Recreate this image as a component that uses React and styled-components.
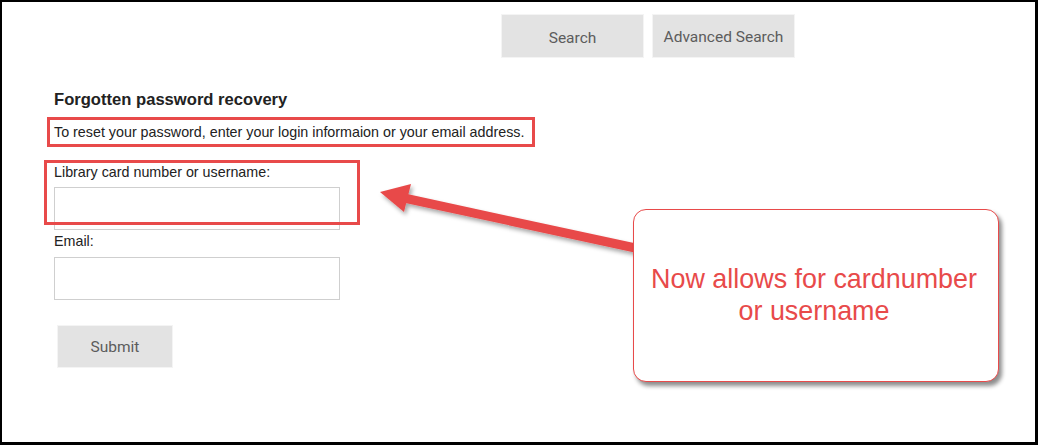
import React from "react";
import styled, { createGlobalStyle } from "styled-components";

const GlobalStyle = createGlobalStyle`
  html, body {
    margin: 0;
    padding: 0;
    background: #fff;
  }
  body {
    font-family: "Liberation Sans", Arial, sans-serif;
  }
`;

const ANNOTATION_RED = "#e84a4a";

const Frame = styled.div`
  position: relative;
  box-sizing: border-box;
  width: 1038px;
  height: 445px;
  border-style: solid;
  border-color: #000;
  border-width: 2px 3px 3px 2px;
  background: #fff;
  overflow: hidden;
`;

const TopBar = styled.div`
  display: flex;
  align-items: flex-start;
  gap: 10px;
  padding: 13px 0 0 500px;
`;

const GreyButton = styled.button`
  box-sizing: border-box;
  width: ${(p) => p.$width || 141}px;
  height: 42px;
  margin: 0;
  padding: ${(p) => (p.$drop ? "3px 0 0" : "1px 0 0")};
  border: none;
  background: #e3e3e3;
  box-shadow: 0 0 0 1px #f4f4f4;
  font-family: Roboto, "Liberation Sans", sans-serif;
  font-size: 15.5px;
  color: #5c5c5c;
  cursor: pointer;
`;

const FormColumn = styled.div`
  display: flex;
  flex-direction: column;
  align-items: flex-start;
  padding-left: 52px;
  color: #222;
`;

const Heading = styled.h2`
  margin: 33px 0 0;
  font-size: 16.6px;
  line-height: 20px;
  font-weight: bold;
  color: #222;
`;

const Notice = styled.p`
  margin: 7px 0 0 -7px;
  padding: 0 8px 0 4px;
  border: 3px solid ${ANNOTATION_RED};
  font-size: 14.3px;
  line-height: 24px;
  color: #222;
`;

const FieldGroup = styled.div`
  position: relative;
  display: flex;
  flex-direction: column;
  margin-top: ${(p) => p.$top}px;
`;

const Label = styled.label`
  font-size: 14.3px;
  line-height: 18px;
  color: #222;
`;

const TextInput = styled.input`
  box-sizing: border-box;
  width: 286px;
  height: 43px;
  margin-top: ${(p) => p.$gap}px;
  border: 1px solid #cfcfcf;
  background: #fff;
`;

const HighlightBox = styled.div`
  position: absolute;
  left: -10px;
  top: -3px;
  width: 316px;
  height: 65px;
  box-sizing: border-box;
  border: 3px solid ${ANNOTATION_RED};
  pointer-events: none;
`;

const SubmitButton = styled(GreyButton)`
  margin: 26px 0 0 4px;
  height: 41px;
`;

const ArrowLayer = styled.svg`
  position: absolute;
  left: -2px;
  top: -2px;
  pointer-events: none;
`;

const Callout = styled.div`
  position: absolute;
  left: 631px;
  top: 207px;
  box-sizing: border-box;
  width: 366px;
  height: 173px;
  display: flex;
  align-items: center;
  justify-content: center;
  padding: 0 4px 2px 0;
  border: 1.5px solid ${ANNOTATION_RED};
  border-radius: 13px;
  background: #fff;
  box-shadow: 3px 4px 4px rgba(0, 0, 0, 0.45);
  text-align: center;
  font-size: 26.9px;
  line-height: 32px;
  color: ${ANNOTATION_RED};
`;

function Arrow() {
  return (
    <ArrowLayer width="1038" height="445" viewBox="0 0 1038 445">
      <defs>
        <filter id="arrowShadow" x="-10%" y="-30%" width="130%" height="180%">
          <feDropShadow dx="2" dy="3" stdDeviation="2" floodColor="#000" floodOpacity="0.35" />
        </filter>
      </defs>
      <g filter="url(#arrowShadow)" fill={ANNOTATION_RED}>
        <line x1="404" y1="198" x2="640" y2="249" stroke={ANNOTATION_RED} strokeWidth="9" />
        <polygon points="380,192 411,184 404,212" />
      </g>
    </ArrowLayer>
  );
}

export default function App() {
  return (
    <>
      <GlobalStyle />
      <Frame>
        <TopBar>
          <GreyButton $drop>Search</GreyButton>
          <GreyButton>Advanced Search</GreyButton>
        </TopBar>

        <FormColumn>
          <Heading>Forgotten password recovery</Heading>
          <Notice>
            To reset your password, enter your login informaion or your email address.
          </Notice>

          <FieldGroup $top={16}>
            <HighlightBox />
            <Label htmlFor="cardnumber">Library card number or username:</Label>
            <TextInput id="cardnumber" type="text" $gap={6} />
          </FieldGroup>

          <FieldGroup $top={2}>
            <Label htmlFor="email">Email:</Label>
            <TextInput id="email" type="text" $gap={7} />
          </FieldGroup>

          <SubmitButton $width={114}>Submit</SubmitButton>
        </FormColumn>

        <Arrow />
        <Callout>
          Now allows for cardnumber
          <br />
          or username
        </Callout>
      </Frame>
    </>
  );
}
